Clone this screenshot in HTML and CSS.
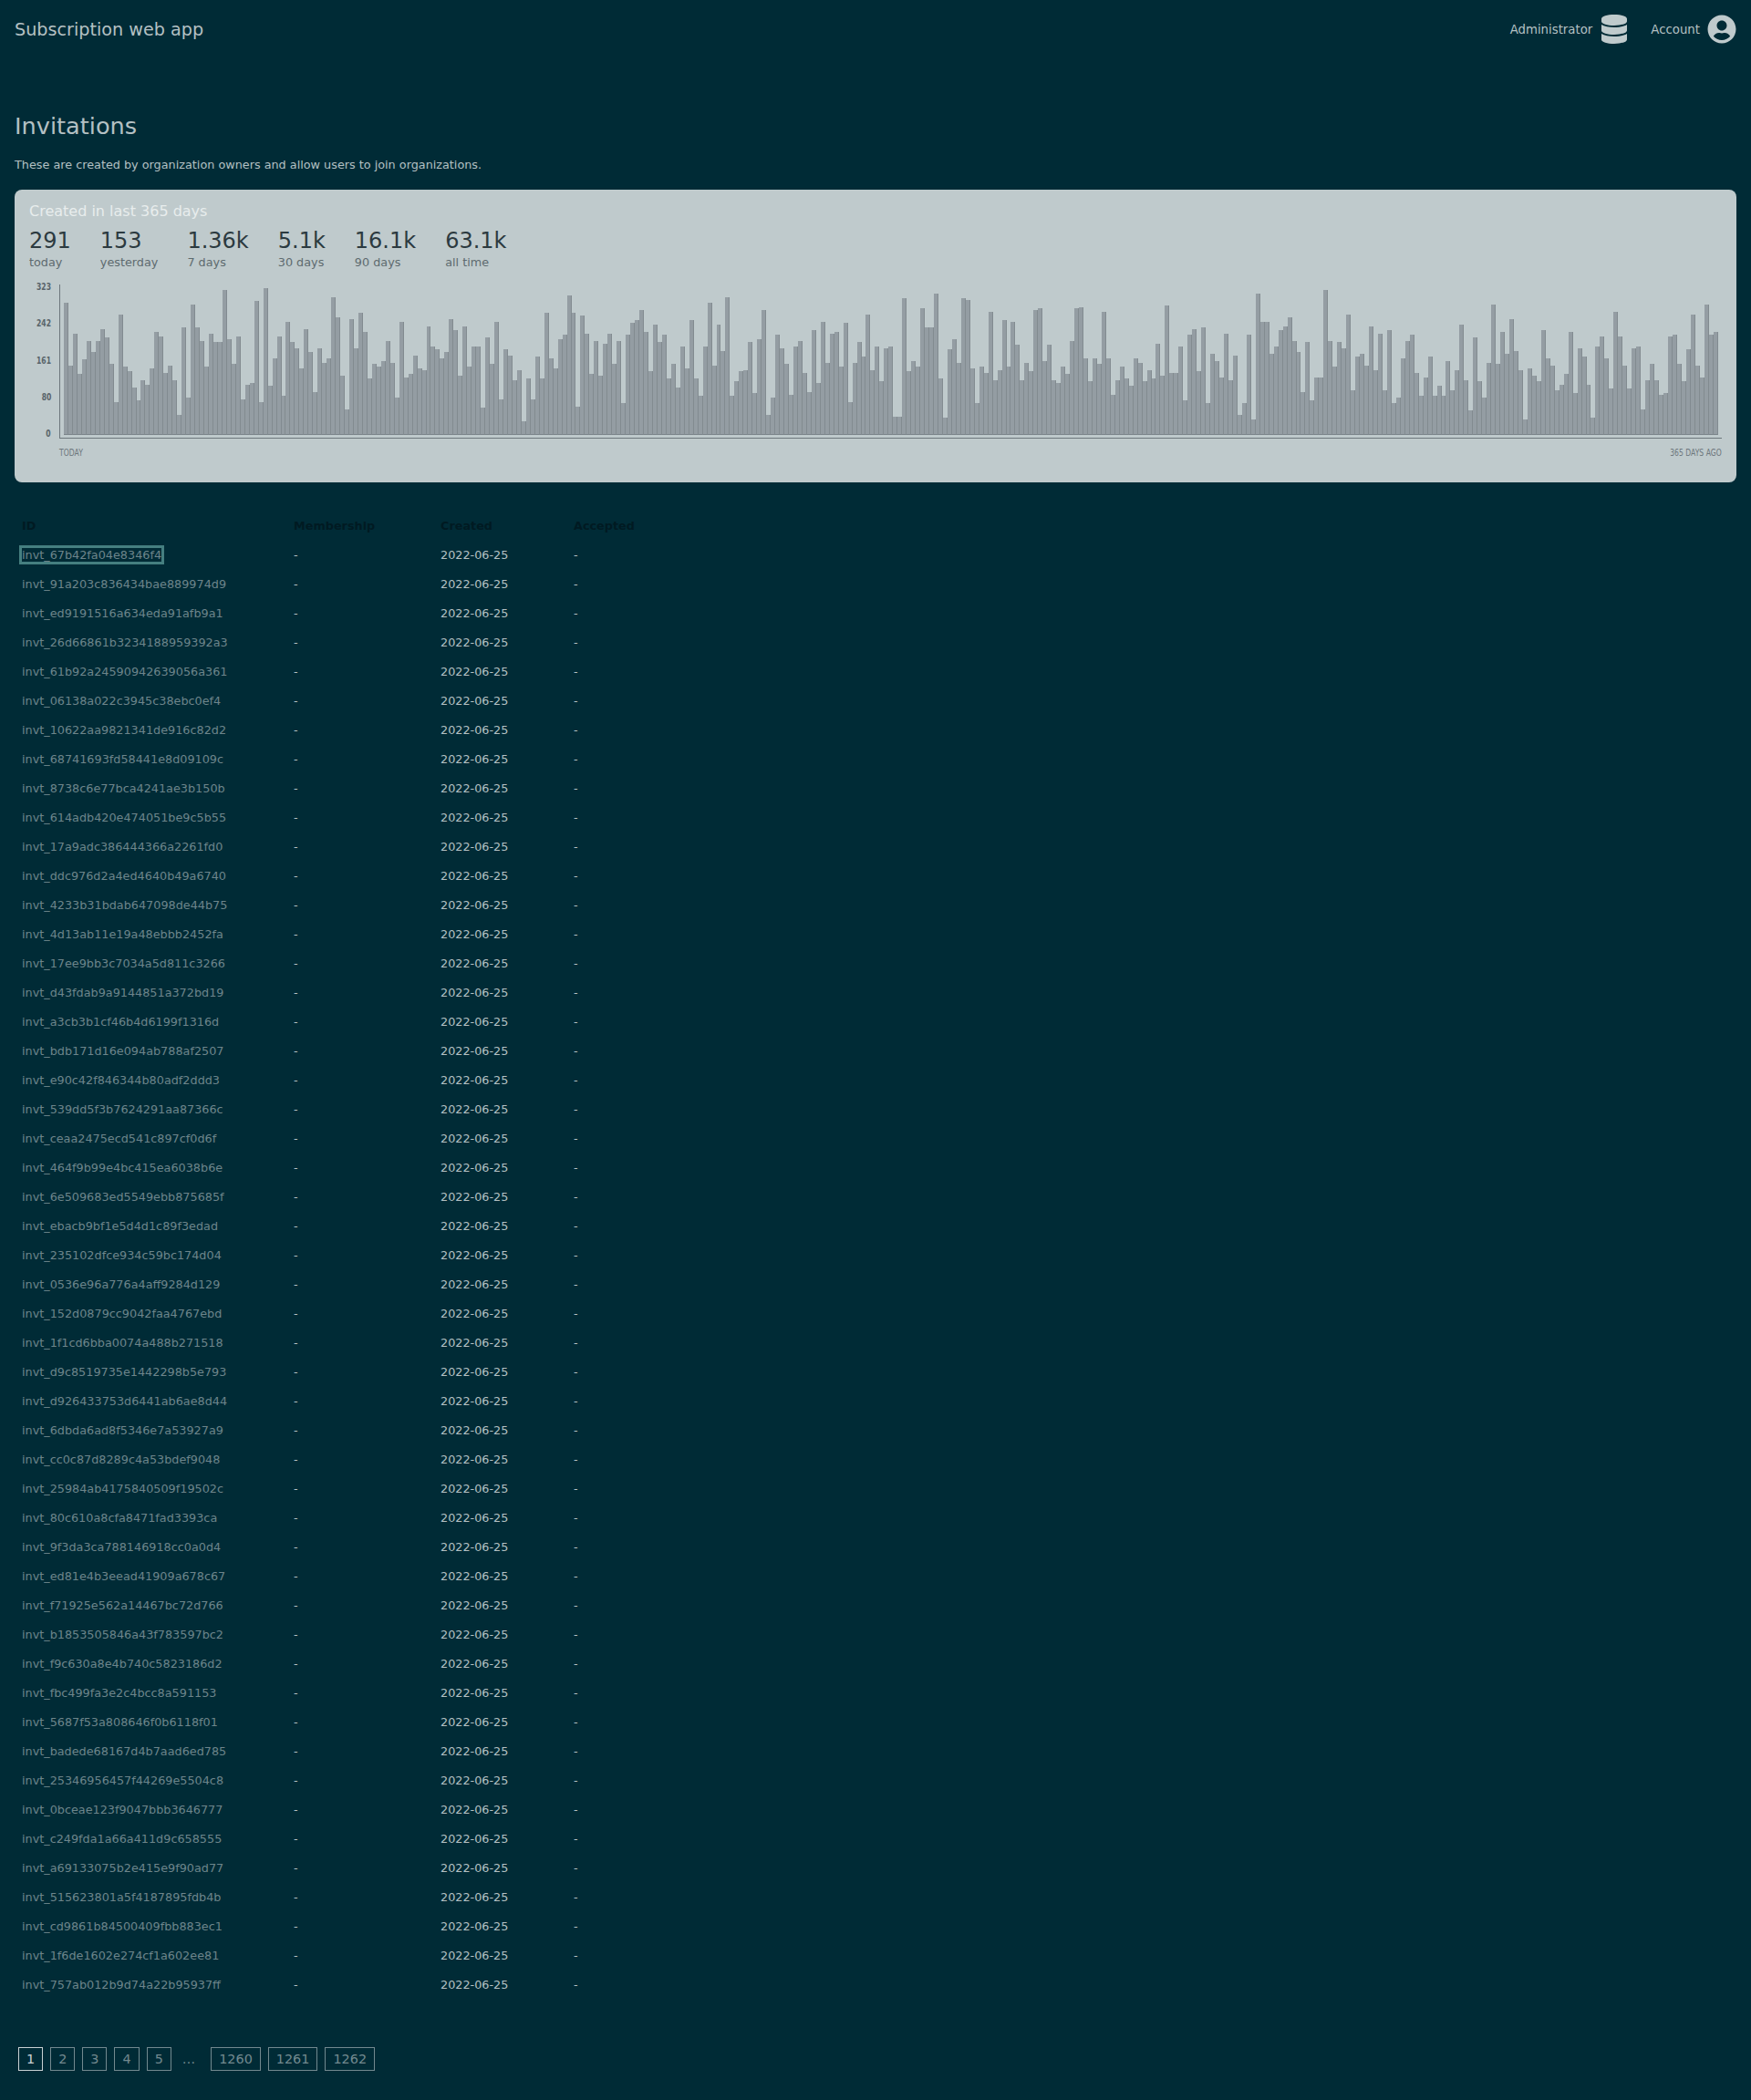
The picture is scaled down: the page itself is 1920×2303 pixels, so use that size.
FILE: index.html
```html
<!DOCTYPE html>
<html lang="en">
<head>
    <meta charset="UTF-8">
    <title>Invitations</title>
    <link rel="stylesheet" href="styles.css">
</head>
<body>
    <header class="topbar">
        <div class="brand">Subscription web app</div>
        <nav class="topnav">
            <a class="nav-item" href="#">Administrator
                <svg class="nav-icon" viewBox="0 0 448 512"><path d="M448 73.143v45.714C448 159.143 347.667 192 224 192S0 159.143 0 118.857V73.143C0 32.857 100.333 0 224 0s224 32.857 224 73.143zM448 176v102.857C448 319.143 347.667 352 224 352S0 319.143 0 278.857V176c48.125 33.143 136.208 48.572 224 48.572S399.874 209.143 448 176zm0 160v102.857C448 479.143 347.667 512 224 512S0 479.143 0 438.857V336c48.125 33.143 136.208 48.572 224 48.572S399.874 369.143 448 336z"/></svg>
            </a>
            <a class="nav-item" href="#">Account
                <svg class="nav-icon" viewBox="0 0 496 512"><path d="M248 8C111 8 0 119 0 256s111 248 248 248 248-111 248-248S385 8 248 8zm0 96c48.6 0 88 39.4 88 88s-39.4 88-88 88-88-39.4-88-88 39.4-88 88-88zm0 344c-58.7 0-111.3-26.6-146.5-68.2 18.8-35.4 55.6-59.8 98.5-59.8 2.4 0 4.8.4 7.1 1.1 13 4.2 26.6 6.9 40.9 6.9 14.3 0 28-2.7 40.9-6.9 2.3-.7 4.7-1.1 7.1-1.1 42.9 0 79.7 24.4 98.5 59.8C359.3 421.4 306.7 448 248 448z"/></svg>
            </a>
        </nav>
    </header>

    <main>
        <h1 class="page-title">Invitations</h1>
        <p class="page-desc">These are created by organization owners and allow users to join organizations.</p>

        <section class="card">
            <h2 class="card-title">Created in last 365 days</h2>
            <div class="stats">
                <div class="stat"><div class="stat-num">291</div><div class="stat-label">today</div></div>
                <div class="stat"><div class="stat-num">153</div><div class="stat-label">yesterday</div></div>
                <div class="stat"><div class="stat-num">1.36k</div><div class="stat-label">7 days</div></div>
                <div class="stat"><div class="stat-num">5.1k</div><div class="stat-label">30 days</div></div>
                <div class="stat"><div class="stat-num">16.1k</div><div class="stat-label">90 days</div></div>
                <div class="stat"><div class="stat-num">63.1k</div><div class="stat-label">all time</div></div>
            </div>
            <div class="chart">
                <div class="y-labels">
                    <span>323</span><span>242</span><span>161</span><span>80</span><span>0</span>
                </div>
                <div class="plot"><div class="bars" id="bars"></div></div>
            </div>
            <div class="x-labels">
                <span class="x-left">TODAY</span>
                <span class="x-right">365 DAYS AGO</span>
            </div>
        </section>

        <table class="invites">
            <thead>
                <tr><th class="col-id">ID</th><th class="col-member">Membership</th><th class="col-created">Created</th><th>Accepted</th></tr>
            </thead>
            <tbody>
                <tr><td><a class="focused" href="#">invt_67b42fa04e8346f4</a></td><td>-</td><td>2022-06-25</td><td>-</td></tr>
                <tr><td><a href="#">invt_91a203c836434bae889974d9</a></td><td>-</td><td>2022-06-25</td><td>-</td></tr>
                <tr><td><a href="#">invt_ed9191516a634eda91afb9a1</a></td><td>-</td><td>2022-06-25</td><td>-</td></tr>
                <tr><td><a href="#">invt_26d66861b3234188959392a3</a></td><td>-</td><td>2022-06-25</td><td>-</td></tr>
                <tr><td><a href="#">invt_61b92a24590942639056a361</a></td><td>-</td><td>2022-06-25</td><td>-</td></tr>
                <tr><td><a href="#">invt_06138a022c3945c38ebc0ef4</a></td><td>-</td><td>2022-06-25</td><td>-</td></tr>
                <tr><td><a href="#">invt_10622aa9821341de916c82d2</a></td><td>-</td><td>2022-06-25</td><td>-</td></tr>
                <tr><td><a href="#">invt_68741693fd58441e8d09109c</a></td><td>-</td><td>2022-06-25</td><td>-</td></tr>
                <tr><td><a href="#">invt_8738c6e77bca4241ae3b150b</a></td><td>-</td><td>2022-06-25</td><td>-</td></tr>
                <tr><td><a href="#">invt_614adb420e474051be9c5b55</a></td><td>-</td><td>2022-06-25</td><td>-</td></tr>
                <tr><td><a href="#">invt_17a9adc386444366a2261fd0</a></td><td>-</td><td>2022-06-25</td><td>-</td></tr>
                <tr><td><a href="#">invt_ddc976d2a4ed4640b49a6740</a></td><td>-</td><td>2022-06-25</td><td>-</td></tr>
                <tr><td><a href="#">invt_4233b31bdab647098de44b75</a></td><td>-</td><td>2022-06-25</td><td>-</td></tr>
                <tr><td><a href="#">invt_4d13ab11e19a48ebbb2452fa</a></td><td>-</td><td>2022-06-25</td><td>-</td></tr>
                <tr><td><a href="#">invt_17ee9bb3c7034a5d811c3266</a></td><td>-</td><td>2022-06-25</td><td>-</td></tr>
                <tr><td><a href="#">invt_d43fdab9a9144851a372bd19</a></td><td>-</td><td>2022-06-25</td><td>-</td></tr>
                <tr><td><a href="#">invt_a3cb3b1cf46b4d6199f1316d</a></td><td>-</td><td>2022-06-25</td><td>-</td></tr>
                <tr><td><a href="#">invt_bdb171d16e094ab788af2507</a></td><td>-</td><td>2022-06-25</td><td>-</td></tr>
                <tr><td><a href="#">invt_e90c42f846344b80adf2ddd3</a></td><td>-</td><td>2022-06-25</td><td>-</td></tr>
                <tr><td><a href="#">invt_539dd5f3b7624291aa87366c</a></td><td>-</td><td>2022-06-25</td><td>-</td></tr>
                <tr><td><a href="#">invt_ceaa2475ecd541c897cf0d6f</a></td><td>-</td><td>2022-06-25</td><td>-</td></tr>
                <tr><td><a href="#">invt_464f9b99e4bc415ea6038b6e</a></td><td>-</td><td>2022-06-25</td><td>-</td></tr>
                <tr><td><a href="#">invt_6e509683ed5549ebb875685f</a></td><td>-</td><td>2022-06-25</td><td>-</td></tr>
                <tr><td><a href="#">invt_ebacb9bf1e5d4d1c89f3edad</a></td><td>-</td><td>2022-06-25</td><td>-</td></tr>
                <tr><td><a href="#">invt_235102dfce934c59bc174d04</a></td><td>-</td><td>2022-06-25</td><td>-</td></tr>
                <tr><td><a href="#">invt_0536e96a776a4aff9284d129</a></td><td>-</td><td>2022-06-25</td><td>-</td></tr>
                <tr><td><a href="#">invt_152d0879cc9042faa4767ebd</a></td><td>-</td><td>2022-06-25</td><td>-</td></tr>
                <tr><td><a href="#">invt_1f1cd6bba0074a488b271518</a></td><td>-</td><td>2022-06-25</td><td>-</td></tr>
                <tr><td><a href="#">invt_d9c8519735e1442298b5e793</a></td><td>-</td><td>2022-06-25</td><td>-</td></tr>
                <tr><td><a href="#">invt_d926433753d6441ab6ae8d44</a></td><td>-</td><td>2022-06-25</td><td>-</td></tr>
                <tr><td><a href="#">invt_6dbda6ad8f5346e7a53927a9</a></td><td>-</td><td>2022-06-25</td><td>-</td></tr>
                <tr><td><a href="#">invt_cc0c87d8289c4a53bdef9048</a></td><td>-</td><td>2022-06-25</td><td>-</td></tr>
                <tr><td><a href="#">invt_25984ab4175840509f19502c</a></td><td>-</td><td>2022-06-25</td><td>-</td></tr>
                <tr><td><a href="#">invt_80c610a8cfa8471fad3393ca</a></td><td>-</td><td>2022-06-25</td><td>-</td></tr>
                <tr><td><a href="#">invt_9f3da3ca788146918cc0a0d4</a></td><td>-</td><td>2022-06-25</td><td>-</td></tr>
                <tr><td><a href="#">invt_ed81e4b3eead41909a678c67</a></td><td>-</td><td>2022-06-25</td><td>-</td></tr>
                <tr><td><a href="#">invt_f71925e562a14467bc72d766</a></td><td>-</td><td>2022-06-25</td><td>-</td></tr>
                <tr><td><a href="#">invt_b1853505846a43f783597bc2</a></td><td>-</td><td>2022-06-25</td><td>-</td></tr>
                <tr><td><a href="#">invt_f9c630a8e4b740c5823186d2</a></td><td>-</td><td>2022-06-25</td><td>-</td></tr>
                <tr><td><a href="#">invt_fbc499fa3e2c4bcc8a591153</a></td><td>-</td><td>2022-06-25</td><td>-</td></tr>
                <tr><td><a href="#">invt_5687f53a808646f0b6118f01</a></td><td>-</td><td>2022-06-25</td><td>-</td></tr>
                <tr><td><a href="#">invt_badede68167d4b7aad6ed785</a></td><td>-</td><td>2022-06-25</td><td>-</td></tr>
                <tr><td><a href="#">invt_25346956457f44269e5504c8</a></td><td>-</td><td>2022-06-25</td><td>-</td></tr>
                <tr><td><a href="#">invt_0bceae123f9047bbb3646777</a></td><td>-</td><td>2022-06-25</td><td>-</td></tr>
                <tr><td><a href="#">invt_c249fda1a66a411d9c658555</a></td><td>-</td><td>2022-06-25</td><td>-</td></tr>
                <tr><td><a href="#">invt_a69133075b2e415e9f90ad77</a></td><td>-</td><td>2022-06-25</td><td>-</td></tr>
                <tr><td><a href="#">invt_515623801a5f4187895fdb4b</a></td><td>-</td><td>2022-06-25</td><td>-</td></tr>
                <tr><td><a href="#">invt_cd9861b84500409fbb883ec1</a></td><td>-</td><td>2022-06-25</td><td>-</td></tr>
                <tr><td><a href="#">invt_1f6de1602e274cf1a602ee81</a></td><td>-</td><td>2022-06-25</td><td>-</td></tr>
                <tr><td><a href="#">invt_757ab012b9d74a22b95937ff</a></td><td>-</td><td>2022-06-25</td><td>-</td></tr>
            </tbody>
        </table>

        <nav class="pagination">
            <a class="page current" href="#">1</a>
            <a class="page" href="#">2</a>
            <a class="page" href="#">3</a>
            <a class="page" href="#">4</a>
            <a class="page" href="#">5</a>
            <span class="dots">…</span>
            <a class="page" href="#">1260</a>
            <a class="page" href="#">1261</a>
            <a class="page" href="#">1262</a>
        </nav>
    </main>

    <script src="chart.js"></script>
</body>
</html>
```

FILE: styles.css
```css
* {
    box-sizing: border-box;
    margin: 0;
    padding: 0;
}

body {
    background-color: #002b36;
    color: #b4c0c3;
    font-family: "DejaVu Sans", sans-serif;
    font-size: 12.8px;
}

a {
    color: inherit;
    text-decoration: none;
}

.topbar {
    display: flex;
    justify-content: space-between;
    align-items: center;
    height: 64px;
    padding: 0 16px;
}

.brand {
    font-size: 19.2px;
}

.topnav {
    display: flex;
    gap: 24px;
}

.nav-item {
    display: flex;
    align-items: center;
    gap: 8px;
    font-size: 13.3px;
}

.nav-icon {
    width: 32px;
    height: 32px;
    fill: #bfcacc;
}

main {
    padding: 0 16px;
}

.page-title {
    margin-top: 59px;
    font-size: 25.6px;
    font-weight: 400;
    line-height: 30px;
}

.page-desc {
    margin-top: 20px;
    line-height: 16px;
}

.card {
    height: 321px;
    margin-top: 19px;
    padding: 14px 16px 0;
    background-color: #bfcacc;
    border-radius: 8px;
}

.card-title {
    color: #e8eded;
    font-size: 16px;
    font-weight: 400;
    line-height: 20px;
}

.stats {
    display: flex;
    gap: 32px;
    margin-top: 7px;
}

.stat-num {
    color: #2c3a40;
    font-size: 24px;
    line-height: 30px;
}

.stat-label {
    color: #5e6a6f;
    line-height: 18px;
}

.chart {
    display: flex;
    margin-top: 15px;
}

.y-labels {
    display: flex;
    flex-direction: column;
    justify-content: space-between;
    align-items: flex-end;
    width: 24px;
    height: 173px;
    margin: -3px 9px 0 0;
    color: #59646a;
    font-size: 9.6px;
    font-weight: 700;
    line-height: 12px;
}

.y-labels span {
    transform: scaleX(.8);
    transform-origin: right center;
}

.plot {
    flex: 1;
    height: 169px;
    padding: 4px 3px 3px 4px;
    border-left: 1px solid #6d777c;
    border-bottom: 1px solid #6d777c;
}

.bars {
    display: flex;
    align-items: flex-end;
    height: 100%;
}

.bar {
    flex: 1;
    background-color: #949da3;
    border-right: 1px solid #828b90;
    border-bottom: 1px solid #7b848a;
}

.x-labels {
    display: flex;
    justify-content: space-between;
    margin: 9px 0 0 33px;
    color: #6d777c;
    font-size: 9.6px;
    line-height: 12px;
}

.x-labels span {
    transform: scaleX(.8);
}

.x-left {
    transform-origin: left center;
}

.x-right {
    transform-origin: right center;
}

.invites {
    margin-top: 31px;
    border-collapse: collapse;
}

.invites th,
.invites td {
    height: 32px;
    padding: 0 8px;
    text-align: left;
}

.invites th {
    color: #001a22;
    font-weight: 700;
}

.col-id {
    width: 298px;
}

.col-member {
    width: 161px;
}

.col-created {
    width: 146px;
}

.invites td a {
    color: #6d858b;
}

.invites td a.focused {
    outline: 3px solid #457f80;
}

.pagination {
    display: flex;
    gap: 8px;
    margin: 53px 0 0 4px;
    font-size: 14.4px;
}

.page {
    height: 26px;
    padding: 0 8px;
    border: 1px solid #72898f;
    color: #72898f;
    line-height: 24px;
}

.page.current {
    border-color: #c8d2d4;
    color: #c8d2d4;
}

.dots {
    padding: 0 9px 0 4px;
    color: #72898f;
    line-height: 26px;
}
```

FILE: chart.js
```js
// bar heights in px, newest day first
const heights = [
    145,76,111,67,83,103,91,103,116,107,78,36,132,75,70,52,38,60,55,73,113,108,68,76,60,22,118,41,143,118,
    103,75,111,102,102,159,105,78,108,39,55,57,147,36,161,54,84,108,43,124,102,95,73,116,91,47,95,79,84,151,
    129,65,28,127,95,134,113,62,78,75,81,103,79,41,124,63,67,87,73,71,119,97,94,84,91,127,115,65,119,75,
    97,97,30,107,78,124,39,94,87,60,71,15,62,39,86,62,134,84,73,105,110,153,134,31,131,111,67,103,65,100,
    111,78,103,
    35,110,123,126,137,113,70,121,102,110,62,78,52,97,73,126,62,43,97,145,76,121,92,151,43,59,70,71,102,46,
    105,137,22,41,110,95,78,44,97,103,68,47,115,57,124,79,111,113,75,123,36,79,102,86,132,71,97,59,95,97,
    20,20,150,70,81,75,139,118,118,155,62,19,94,105,79,150,148,73,35,75,68,135,60,71,126,75,124,99,60,79,
    70,137,139,81,99,60,57,75,67,103,139,140,84,59,84,78,135,84,44,60,75,62,54,84,79,59,71,62,100,65,142,
    68,68,97,38,110,116,70,118,35,89,81,63,111,60,87,22,35,110,17,155,124,124,89,97,115,119,129,103,91,47,
    102,38,63,63,159,103,75,102,95,132,49,86,89,76,119,71,111,49,115,35,41,84,103,110,68,43,63,86,43,54,
    43,81,49,71,121,60,27,107,59,41,79,143,78,113,89,127,92,71,17,73,65,59,115,84,76,49,55,67,113,46,
    95,86,55,19,97,108,84,51,135,108,76,51,95,97,28,60,78,60,44,46,108,110,78,59,94,132,76,63,143,110,113
];

const bars = document.getElementById('bars');

heights.forEach(h => {
    const bar = document.createElement('div');
    bar.className = 'bar';
    bar.style.height = `${h}px`;
    bars.appendChild(bar);
});
```
